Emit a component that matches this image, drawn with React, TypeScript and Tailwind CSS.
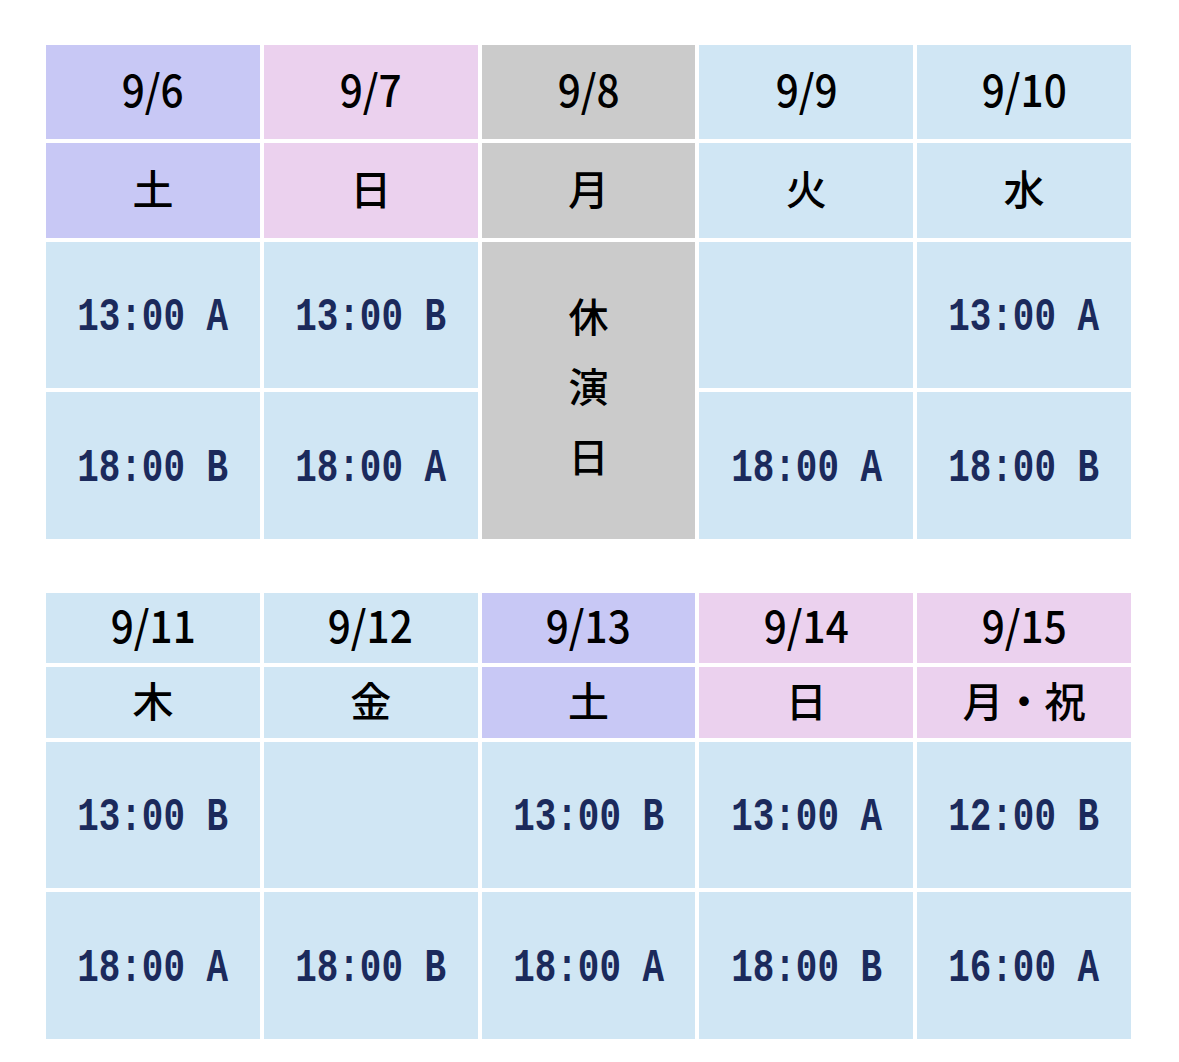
import React from 'react';

type Tone = 'sat' | 'sun' | 'off' | 'day';

interface Day {
	date: string;
	weekday: string;
	tone: Tone;
	early?: string;
	late?: string;
	closed?: boolean;
}

const toneBg: Record<Tone, string> = {
	sat: 'bg-[#c8c8f5]',
	sun: 'bg-[#ebd1ee]',
	off: 'bg-[#cbcbcb]',
	day: 'bg-[#d0e6f4]',
};

const week1: Day[] = [
	{ date: '9/6', weekday: '土', tone: 'sat', early: '13:00 A', late: '18:00 B' },
	{ date: '9/7', weekday: '日', tone: 'sun', early: '13:00 B', late: '18:00 A' },
	{ date: '9/8', weekday: '月', tone: 'off', closed: true },
	{ date: '9/9', weekday: '火', tone: 'day', late: '18:00 A' },
	{ date: '9/10', weekday: '水', tone: 'day', early: '13:00 A', late: '18:00 B' },
];

const week2: Day[] = [
	{ date: '9/11', weekday: '木', tone: 'day', early: '13:00 B', late: '18:00 A' },
	{ date: '9/12', weekday: '金', tone: 'day', late: '18:00 B' },
	{ date: '9/13', weekday: '土', tone: 'sat', early: '13:00 B', late: '18:00 A' },
	{ date: '9/14', weekday: '日', tone: 'sun', early: '13:00 A', late: '18:00 B' },
	{ date: '9/15', weekday: '月・祝', tone: 'sun', early: '12:00 B', late: '16:00 A' },
];

function Time({ value }: { value?: string }) {
	return (
		<div className="flex items-center justify-center bg-[#d0e6f4] pt-[6px]">
			{value && (
				<span className="inline-block scale-x-[0.78] whitespace-pre font-['Liberation_Mono',monospace] text-[46px] font-bold leading-none text-[#1b2a5c]">
					{value}
				</span>
			)}
		</div>
	);
}

function Week({ days, rows }: { days: Day[]; rows: string }) {
	return (
		<div className={`grid grid-flow-col grid-cols-5 gap-[4px] ${rows}`}>
			{days.map((d) => (
				<React.Fragment key={d.date}>
					<div
						className={`flex items-center justify-center pb-[8px] font-['Noto_Sans_CJK_JP',sans-serif] text-[44px] font-medium leading-none text-black ${toneBg[d.tone]}`}
					>
						<span className="inline-block scale-x-[0.92]">{d.date}</span>
					</div>
					<div
						className={`flex items-center justify-center pb-[6px] font-['Noto_Sans_CJK_JP',sans-serif] text-[41px] font-medium leading-none text-black ${toneBg[d.tone]}`}
					>
						{d.weekday}
					</div>
					{d.closed ? (
						<div className="row-span-2 flex flex-col items-center justify-center bg-[#cbcbcb] pb-[12px] font-['Noto_Sans_CJK_JP',sans-serif] text-[40px] font-medium leading-[70px] text-black">
							<span>休</span>
							<span>演</span>
							<span>日</span>
						</div>
					) : (
						<>
							<Time value={d.early} />
							<Time value={d.late} />
						</>
					)}
				</React.Fragment>
			))}
		</div>
	);
}

export default function App() {
	return (
		<div className="min-h-[1062px] w-[1179px] bg-white pl-[46px] pt-[45px]">
			<div className="flex w-[1085px] flex-col gap-[54px]">
				<Week days={week1} rows="grid-rows-[94px_95px_146px_147px]" />
				<Week days={week2} rows="grid-rows-[70px_71px_146px_147px]" />
			</div>
		</div>
	);
}
